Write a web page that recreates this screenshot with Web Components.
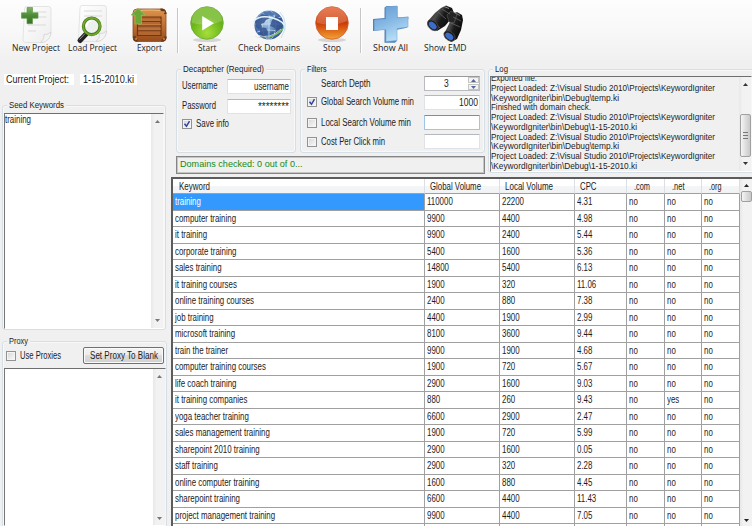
<!DOCTYPE html>
<html lang="en"><head><meta charset="utf-8"><title>Keyword Igniter</title>
<style>
body{margin:0;width:752px;height:526px;overflow:hidden;background:#f0f0f0;font-family:"Liberation Sans",Arial,sans-serif;color:#1c1c1c}
</style></head><body><keyword-app></keyword-app>
<script>
const define=(name,html,after)=>customElements.define(name,class extends HTMLElement{
  connectedCallback(){
    if(this.shadowRoot)return;
    const r=this.attachShadow({mode:'open'});
    r.innerHTML=typeof html==='function'?html(this):html;
    if(after)after(this,r);
  }
});

/* Text condensed to a given width (w) or by a ratio (s). */
define('fit-text',`<style>:host{display:inline-block;white-space:pre;height:12px;line-height:12px;font-size:10px;flex:none;text-align:left}
span{display:inline-block;transform-origin:0 50%;vertical-align:top}</style><span><slot></slot></span>`,(el,r)=>{
  const s=r.querySelector('span');
  if(el.getAttribute('size'))el.style.fontSize=el.getAttribute('size')+'px';
  const n=s.getBoundingClientRect().width;
  const k=el.hasAttribute('w')?el.getAttribute('w')/n:+(el.getAttribute('s')||.79);
  s.style.transform=`scaleX(${k})`;
  s.style.marginRight=(n*k-n)+'px';
  el.style.width=n*k+'px';
});

const icons={
doc:`<linearGradient id="p" x2="1" y2="1"><stop stop-color="#fff"/><stop offset="1" stop-color="#ededed"/></linearGradient>
<path d="M7 1.500h22q2.500 0 2.500 2.500v22.500q0 4-3.500 7.500t-7 3.500H6q-2.500 0-2.500-2.500L5 4q0-2.500 2-2.500z" fill="url(#p)" stroke="#dedede" stroke-width=".8"/>
<path d="M31.500 27q-3 3-7 2.500 1 4-3.500 8 6 0 9-5 1.500-2.500 1.500-5.500z" fill="#f3f3f3" stroke="#cfcfcf" stroke-width=".7"/>
<path d="M9 7h18M9 12h18M8.500 20h18M8.500 26h8" stroke="#d9d9d9" stroke-width="1.100"/>`};
icons.new=`<linearGradient id="g" x2="0" y2="1"><stop stop-color="#7fb661"/><stop offset=".5" stop-color="#4b8b35"/><stop offset="1" stop-color="#387323"/></linearGradient><g transform="translate(1.500 1)">${icons.doc}</g>
<g transform="translate(1 2)"><path d="M8 1.500h5.500v5.300H19v5.400h-5.500v5.500H8v-5.500H2.500V6.800H8z" fill="url(#g)" stroke="#5f9b48" stroke-width=".7"/></g>`;
icons.load=`${icons.doc}<g transform="translate(-.5 1.500)"><path d="M12 28l-6.500 7" stroke="#222" stroke-width="5" stroke-linecap="round"/><path d="M10.500 28l-5.500 6" stroke="#999" stroke-width="1"/>
<circle cx="17.200" cy="20.800" r="8.300" fill="#edf1ee" stroke="#437718" stroke-width="3.200"/><circle cx="17.200" cy="20.800" r="8.500" fill="none" stroke="#71a82b" stroke-width="1.700"/><path d="M12 21q0-5 5-5.500" stroke="#fff" stroke-width="1.500" fill="none"/></g>`;
icons.export=`<linearGradient id="w" x2="0" y2="1"><stop stop-color="#dc944d"/><stop offset=".6" stop-color="#b96a2e"/><stop offset="1" stop-color="#954b1b"/></linearGradient><g transform="translate(.5 1)">
<rect x="1.500" y="4" width="33" height="32.500" rx="4" fill="url(#w)" stroke="#8b4a20" stroke-width=".8"/><path d="M6 12h23.500v18.500H6z" fill="#b26732" stroke="#713610" stroke-width="1.200"/>
<path d="M6.500 16.500h23M6.500 21h23M6.500 25.800h23" stroke="#743b19" stroke-width="1.100"/><path d="M6.500 15h23M6.500 19.500h23M6.500 24h23" stroke="#c98447" stroke-width=".8"/>
<path d="M3 6q15-2 31 0" stroke="#efba74" stroke-width="1.200" fill="none"/><path d="M3 31v2.500q0 2 3 2M30 35.500q4 0 4-4M29 5q4-1 5 4" stroke="#6e3819" stroke-width="2.500" fill="none"/><path d="M4 34h1M32 34h1M32 7h1" stroke="#ffd18d" stroke-width="1.300"/>
<path d="M6.500 3.500l7 6.500H10v9H3.500v-9H-.5z" fill="#6aa737" stroke="#90bb66" stroke-width=".7"/></g>`;
icons.start=`<radialGradient id="s" cy=".8"><stop stop-color="#a6de3c"/><stop offset="1" stop-color="#69b41a"/></radialGradient><ellipse cx="18" cy="36" rx="14" ry="2" fill="#0002"/><circle cx="18" cy="19" r="16.300" fill="url(#s)" stroke="#6fa738" stroke-width=".8"/><path d="M3 17a15 14 0 0 1 30 0q-13 6-30 2z" fill="#fff" opacity=".2"/><path d="M13.200 12v14.500L25 19.200z" fill="#fff"/>`;
icons.globe=`<radialGradient id="b" cx=".4" cy=".35"><stop stop-color="#bed9ee"/><stop offset=".6" stop-color="#719acb"/><stop offset="1" stop-color="#395e9f"/></radialGradient><circle cx="18" cy="21" r="14.600" fill="url(#b)"/>
<g fill="none" stroke="#d2e5f5" stroke-width=".7"><ellipse cx="18" cy="21" rx="7" ry="14.500"/><path d="M18 7v28M4 20h28M6 13q12 4 24 0M6 28q12-4 24 0"/></g>
<path d="M6 14l5-4 6 1 2 3-4 2-2 3-3 1 1 3-3 3-3-3-1-5zM9 23l6 1 2 4-4 6-4-3zM21 16l4-4 5 3 2 6-4 7-3 3-1-7-5-2z" fill="#36558f" opacity=".85"/><path d="M12 8l7-1 5 3-3 2-7-1z" fill="#5077ae"/>
<path d="M2 18Q8 10 22 14T34 27" fill="none" stroke="#e6f3fa" stroke-width="1.500"/><path d="M3 32q15 6 30-9l-1 3q-13 12-28 6.500z" fill="#84c05d"/><path d="M6 31q13 5 24-6" stroke="#e8f4dd" fill="none" stroke-width=".7"/><path d="M29 8q10 11 1 26" fill="none" stroke="#afddec" stroke-width=".8"/>`;
icons.stop=`<linearGradient id="o" x2="0" y2="1"><stop stop-color="#e35c28"/><stop offset=".5" stop-color="#cb3a08"/><stop offset="1" stop-color="#f5a431"/></linearGradient><ellipse cx="18" cy="36" rx="14" ry="2" fill="#0002"/><circle cx="18" cy="19" r="16.300" fill="url(#o)" stroke="#cf5d32" stroke-width=".8"/><path d="M3 17a15 14 0 0 1 30 0q-13 6-30 2z" fill="#fff" opacity=".2"/><path d="M12 13h12v13H12z" fill="#fff"/>`;
icons.plus=`<linearGradient id="u" x2=".4" y2="1"><stop stop-color="#679bd1"/><stop offset=".5" stop-color="#83b6e3"/><stop offset="1" stop-color="#b5ddf4"/></linearGradient><g transform="translate(0 .5)"><path d="M12.500 3l2-1.500h11v11.500l11-.8-1.500 11-10 2v11l-2 2H12.500V25L1 26.500V14.500l11.500-1z" fill="#5482b8"/><path d="M14 2.500l11-1v12l11-1v10l-11 1.500v12L14 37V25L2.500 26V15.500l11.500-1z" fill="url(#u)" stroke="#79a9d7" stroke-width=".6"/></g>`;
icons.binoculars=`<linearGradient id="k" x1="0" y1="0" x2="1" y2=".6"><stop stop-color="#161616"/><stop offset=".4" stop-color="#4c4c4c"/><stop offset=".6" stop-color="#1b1b1b"/><stop offset="1" stop-color="#080808"/></linearGradient>
<path d="M1 17l7-8 6-5 5-2.500 6 2.500 2 5-4 7-5 6-8 5z" fill="url(#k)"/><path d="M18 28l6-12 2-6 4-2 5 3 1 5-2 10-4 9-6 3z" fill="url(#k)"/><path d="M20 11l4-4 6 3-3 9-5-1z" fill="#252525" stroke="#696969" stroke-width=".5"/><path d="M11 8l8 7M15 5l8 5M4 16l9 8M24 19l9 4M26 13l8 4" stroke="#6d6d6d" stroke-width=".7" fill="none"/><path d="M17 2.500l5 2" stroke="#8a8a8a"/><path d="M28 9l5 2.500" stroke="#777"/>
<ellipse cx="5.800" cy="21.300" rx="4.300" ry="6.300" transform="rotate(-45 5.800 21.300)" fill="#19191b" stroke="#4a4a4a" stroke-width=".8"/><ellipse cx="5.700" cy="21.500" rx="2.900" ry="4.600" transform="rotate(-45 5.700 21.500)" fill="#3d6cc7"/>
<ellipse cx="22.500" cy="32" rx="4.300" ry="6.300" transform="rotate(-50 22.500 32)" fill="#19191b" stroke="#4a4a4a" stroke-width=".8"/><ellipse cx="22.300" cy="32.300" rx="2.900" ry="4.600" transform="rotate(-50 22.300 32.300)" fill="#3d6cc7"/>`;

define('tool-button',el=>`<style>:host{display:flex;flex-direction:column;align-items:center;font-family:"Open Sans","Noto Sans",sans-serif;color:#222}
svg{width:36px;height:38px;margin-top:4px;overflow:visible}</style><svg viewBox="0 0 36 38" fill="none">${icons[el.getAttribute('icon')]}</svg><fit-text size="9.5" w="${el.getAttribute('w')}">${el.getAttribute('label')}</fit-text>`);
define('tool-separator',`<style>:host{display:block;height:45px;margin-top:8px;border-left:1px solid #c6c6c6;border-right:1px solid #fff;box-sizing:border-box}</style>`);
define('tool-bar',`<style>:host{display:grid;height:62px;box-sizing:border-box;padding-left:8px;grid-template-columns:56px 57px 56px 2px 56px 68px 57px 2px 56px 54px;align-items:start;background:linear-gradient(#fdfdfd,#f8f8f8 50%,#f0f0f0)}</style><slot></slot>`);

define('group-box',el=>`<style>:host{display:block;position:relative;box-sizing:border-box;border:1px solid #d5dfe5;border-radius:3px;box-shadow:inset 0 0 0 1px #f8f8f8}
.l{position:absolute;left:4px;top:-7px;background:#f0f0f0;padding:0 2px;line-height:0}</style><div class="l"><fit-text size="9.7" w="${el.getAttribute('w')}">${el.getAttribute('label')}</fit-text></div><slot></slot>`);

define('check-box',el=>`<style>:host{display:flex;align-items:center;gap:4px}
i{width:10px;height:10px;box-sizing:border-box;border:1px solid #929292;background:linear-gradient(135deg,#d2d5d9,#fbfbfb);box-shadow:inset 0 0 0 1px #f4f4f4;flex:none}
svg{display:block;width:8px;height:8px}</style><i>${el.hasAttribute('checked')?'<svg viewBox="0 0 8 8"><path d="M1.500 3.800l2 2.500L6.500 1.200" fill="none" stroke="#35439b" stroke-width="1.500"/></svg>':''}</i><fit-text w="${el.getAttribute('w')}"><slot></slot></fit-text>`);

define('text-field',`<style>:host{display:flex;align-items:center;justify-content:flex-end;box-sizing:border-box;height:15px;padding-right:1px;background:#fff;border:1px solid #dfe3e8;border-top-color:#b4b7bf;border-radius:1px}
:host([focused]){border-color:#9cc5e6;border-top-color:#5b99ca}</style><slot></slot>`);

define('spin-field',`<style>:host{display:flex;box-sizing:border-box;height:15px;background:#fff;border:1px solid #b8bcc2;border-top-color:#999;align-items:center}
.v{flex:1;display:flex;justify-content:center}.b{width:11px;height:13px;display:grid;grid-template-rows:6px 6px;gap:1px}
b{border:1px solid #c4c4c4;background:#f3f3f3;box-sizing:border-box;display:flex;align-items:center;justify-content:center}svg{width:5px;height:3px}</style>
<div class="v"><slot></slot></div><div class="b"><b><svg viewBox="0 0 5 3"><path d="M0 3L2.500 0 5 3z" fill="#5264a0"/></svg></b><b><svg viewBox="0 0 5 3"><path d="M0 0L2.500 3 5 0z" fill="#5264a0"/></svg></b></div>`);

define('scroll-bar',el=>`<style>:host{display:flex;flex-direction:column;align-items:center;width:12px;box-sizing:border-box;padding:6px 0;background:linear-gradient(90deg,#e8e8e8,#f2f2f2 30%);flex:none}
svg{width:5px;height:3px;flex:none}.t{width:11px;box-sizing:border-box;border:1px solid #a0a0a0;border-radius:2px;background:linear-gradient(90deg,#f5f5f5,#dedede 50%,#c9c9c9);display:flex;flex-direction:column;gap:1px;align-items:center;justify-content:center}
.t u{width:5px;height:1px;background:#777;margin-bottom:1px}.f{flex:1}</style>
<svg viewBox="0 0 5 3"><path d="M0 3L2.500 0 5 3z" fill="var(--arrow,#777)"/></svg>${el.hasAttribute('size')?`<div class="t" style="height:${el.getAttribute('size')}px;margin-top:${el.getAttribute('offset')}px">${el.hasAttribute('grip')?'<u></u><u></u><u></u>':''}</div>`:''}<div class="f"></div>
<svg viewBox="0 0 5 3"><path d="M0 0L2.500 3 5 0z" fill="var(--arrow,#777)"/></svg>`);

define('text-pane',`<style>:host{display:flex;box-sizing:border-box;border-top:1px solid #6e6e6e;border-left:1px solid #777;border-right:1px solid #f7f7f7;border-bottom:1px solid #fff;background:#fff;overflow:hidden}
.c{flex:1;min-width:0;overflow:hidden}</style><div class="c"><slot></slot></div><slot name="bar"></slot>`);

define('push-button',`<style>:host{display:flex;align-items:center;justify-content:center;box-sizing:border-box;height:17px;border:1px solid #707070;border-radius:2px;background:linear-gradient(#f4f4f4,#ebebeb 50%,#dcdcdc 50%,#d0d0d0);box-shadow:inset 0 0 0 1px #fafafa}</style><slot></slot>`);

define('left-panel',`<style>:host{display:flex;flex-direction:column}
.p{height:43px;display:flex;align-items:flex-start;gap:6px;padding:12px 0 0 4px;box-sizing:border-box;flex:none}
.p div{background:#fff;height:11px;display:flex;align-items:center;box-sizing:border-box}
.p fit-text{margin-top:1px}
group-box{flex:none}
.seed{margin-left:2px;width:164px;height:225px;padding:7px 1px 1px}.seed text-pane{width:160px;height:216px}
.proxy{margin:11px 0 0 2px;width:165px;height:200px;padding:5px 1px 0}.proxy text-pane{width:162px;height:158px;margin-top:4px}
.r{display:flex;justify-content:space-between;padding:0 1px 0 2px}push-button{width:81px}text-pane fit-text{display:block}</style>
<div class="p"><div style="width:70px;padding-left:2px"><fit-text w="63">Current Project:</fit-text></div><div style="width:57px;padding-left:3px"><fit-text w="51">1-15-2010.ki</fit-text></div></div>
<group-box class="seed" label="Seed Keywords" w="55"><text-pane><fit-text w="26">training</fit-text><scroll-bar slot="bar"></scroll-bar></text-pane></group-box>
<group-box class="proxy" label="Proxy" w="19"><div class="r"><check-box w="41">Use Proxies</check-box><push-button><fit-text w="68">Set Proxy To Blank</fit-text></push-button></div><text-pane><scroll-bar slot="bar" style="padding-bottom:5px"></scroll-bar></text-pane></group-box>`);

const log=[['Exported file.',46],['Project Loaded: Z:\\Visual Studio 2010\\Projects\\KeywordIgniter',224],['\\KeywordIgniter\\bin\\Debug\\temp.ki',128],['Finished with domain check.',100],['Project Loaded: Z:\\Visual Studio 2010\\Projects\\KeywordIgniter',224],['\\KeywordIgniter\\bin\\Debug\\1-15-2010.ki',146],['Project Loaded: Z:\\Visual Studio 2010\\Projects\\KeywordIgniter',224],['\\KeywordIgniter\\bin\\Debug\\temp.ki',128],['Project Loaded: Z:\\Visual Studio 2010\\Projects\\KeywordIgniter',224],['\\KeywordIgniter\\bin\\Debug\\1-15-2010.ki',146]];
define('log-lines',()=>`<style>:host{display:block;margin-top:-4px}div{height:9.78px;line-height:0}fit-text{height:10px;line-height:10px}</style>${log.map(([t,w])=>`<div><fit-text w="${w}" size="9.7">${t}</fit-text></div>`).join('')}`);

define('settings-panel',`<style>:host{display:grid;grid-template-columns:120px 185px 265px;column-gap:4px;padding:7px 0 0 8px;grid-template-rows:84px 18px;row-gap:3px;height:115px;box-sizing:border-box}
.d{grid-area:1/1}.f{grid-area:1/2}.log{grid-area:1/3/3/4}.status{grid-area:2/1/3/3}
.d{padding:9px 3px 0 5px}.d .r{display:grid;grid-template-columns:45px 64px;height:19.500px;align-items:start}.d .r>fit-text{margin-top:1px}
.f{padding:6px 4px 0 6px}.r{display:grid;grid-template-columns:117px 56px;height:19.400px;align-items:start}
.f check-box{height:12px;margin-top:1px}.log{height:104px;padding:6px 1px 0;margin-left:-1px}
.log text-pane{height:96px;background:#f0f0f0}.status{border:1px solid #858585;box-shadow:inset 1px 1px 0 #c5c5c5,inset -1px -1px 0 #c5c5c5;color:#128a12;display:flex;align-items:center;padding:0 0 2px 3px;box-sizing:border-box;width:309px}</style>
<group-box class="d" label="Decaptcher (Required)" w="81"><div class="r"><fit-text w="35.500">Username</fit-text><text-field><fit-text w="35">username</fit-text></text-field></div><div class="r"><fit-text w="34">Password</fit-text><text-field><fit-text w="31" style="position:relative;top:1px">********</fit-text></text-field></div><check-box checked w="33" style="height:12px">Save info</check-box></group-box>
<group-box class="f" label="Filters" w="19.500"><div class="r"><fit-text style="margin:2px 0 0 14px" w="49.500">Search Depth</fit-text><spin-field><fit-text s=".85">3</fit-text></spin-field></div>
<div class="r"><check-box checked w="93">Global Search Volume min</check-box><text-field><fit-text w="19">1000</fit-text></text-field></div>
<div class="r"><check-box w="90" style="margin-top:2px">Local Search Volume min</check-box><text-field focused></text-field></div>
<div class="r"><check-box w="64" style="margin-top:2px">Cost Per Click min</check-box><text-field></text-field></div></group-box>
<group-box class="log" label="Log" w="13"><text-pane style="--arrow:#333"><log-lines></log-lines><scroll-bar slot="bar" size="43" offset="28" grip></scroll-bar></text-pane></group-box>
<div class="status"><fit-text w="122.500" size="9.8">Domains checked: 0 out of 0...</fit-text></div>`);

const rows=`training|110000|22200|4.31
computer training|9900|4400|4.98
it training|9900|2400|5.44
corporate training|5400|1600|5.36
sales training|14800|5400|6.13
it training courses|1900|320|11.06
online training courses|2400|880|7.38
job training|4400|1900|2.99
microsoft training|8100|3600|9.44
train the trainer|9900|1900|4.68
computer training courses|1900|720|5.67
life coach training|2900|1600|9.03
it training companies|880|260|9.43
yoga teacher training|6600|2900|2.47
sales management training|1900|720|5.99
sharepoint 2010 training|2900|1600|0.05
staff training|2900|320|2.28
online computer training|1600|880|4.45
sharepoint training|6600|4400|11.43
project management training|9900|4400|7.05`.split('\n').map(r=>r.split('|'));
define('data-grid',()=>`<style>:host{display:flex;box-sizing:border-box;border:2px solid #5c5c5c;border-right:0;border-bottom:0;background:#fff;margin-left:3px;overflow:hidden}
.g{width:567px}.r{display:grid;grid-template-columns:252px 75px 75px 52px 38px 37px 38px;height:16.500px}
.r>div{border:solid #a0a0a0;border-width:0 1px 1px 0;box-sizing:border-box;padding:2px 0 0 2px;line-height:0;overflow:hidden}
.h{height:15px;background:linear-gradient(#fff 45%,#f4f5f6 50%,#f1f2f3)}.h>div{border-right-color:#dcdfe3;padding:2px 0 0 5px}.h>div:first-child{padding-left:6px}.h>div:nth-child(n+5){padding-left:7px}
.r:nth-child(2)>div:first-child{background:#3399ff;color:#fff}</style>
<div class="g"><div class="r h">${[['Keyword',31],['Global Volume',51],['Local Volume',48],['CPC',16.5],['.com',16],['.net',12.5],['.org',12.5]].map(([t,w])=>`<div><fit-text w="${w}">${t}</fit-text></div>`).join('')}</div>
${rows.map((r,i)=>`<div class="r">${[...r,'no',i===12?'yes':'no','no'].map(c=>`<div><fit-text>${c}</fit-text></div>`).join('')}</div>`).join('')}<div class="r"><div></div><div></div><div></div><div></div><div></div><div></div><div></div></div></div>
<scroll-bar size="11" offset="4" style="--arrow:#222;padding:5px 0 4px"></scroll-bar>`);

define('keyword-app',`<style>:host{display:grid;width:752px;height:526px;grid-template:62px 464px/168px 584px;overflow:hidden}tool-bar{grid-column:1/3}.right{display:grid;grid-template-rows:115px 349px;min-width:0}</style>
<tool-bar><tool-button icon="new" label="New Project" w="48"></tool-button><tool-button icon="load" label="Load Project" w="49"></tool-button><tool-button icon="export" label="Export" w="25"></tool-button><tool-separator></tool-separator><tool-button icon="start" label="Start" w="18.500"></tool-button><tool-button icon="globe" label="Check Domains" w="62"></tool-button><tool-button icon="stop" label="Stop" w="18"></tool-button><tool-separator></tool-separator><tool-button icon="plus" label="Show All" w="35"></tool-button><tool-button icon="binoculars" label="Show EMD" w="42.500"></tool-button></tool-bar>
<left-panel></left-panel><div class="right"><settings-panel></settings-panel><data-grid></data-grid></div>`);
</script></body></html>
